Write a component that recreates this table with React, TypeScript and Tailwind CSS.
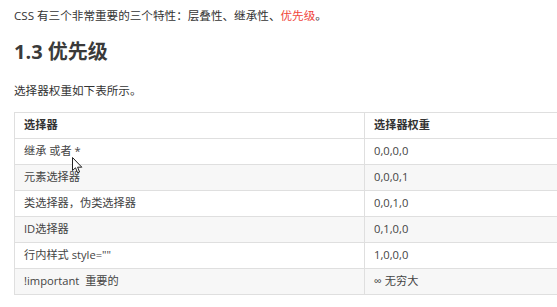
import React from "react";

const rows = [
  ["继承 或者 *", "0,0,0,0"],
  ["元素选择器", "0,0,0,1"],
  ["类选择器，伪类选择器", "0,0,1,0"],
  ["ID选择器", "0,1,0,0"],
  ['行内样式 style=""', "1,0,0,0"],
  ["!important  重要的", "∞ 无穷大"],
];

function Cursor() {
  return (
    <svg
      className="absolute left-[72px] top-[157px]"
      width="11"
      height="17"
      viewBox="0 0 11 17"
    >
      <path
        d="M0.5 0.5 L0.5 13.5 L3.5 10.8 L5.6 15.8 L7.6 15 L5.6 10.2 L9.8 10.2 Z"
        fill="#fff"
        stroke="#222"
        strokeWidth="1"
        strokeLinejoin="round"
      />
    </svg>
  );
}

export default function App() {
  return (
    <div
      className="relative w-[557px] h-[307px] overflow-hidden bg-white text-[#333]"
      style={{ fontFamily: '"Open Sans", "Noto Sans CJK SC", sans-serif' }}
    >
      <div className="pt-[6px] pl-[14px]">
        <p className="text-[11.6px] leading-[20px] whitespace-nowrap">
          CSS 有三个非常重要的三个特性：层叠性、继承性、
          <span className="text-[#f0443a]">优先级</span>。
        </p>
        <h2 className="mt-[12px] text-[20px] leading-[28px] font-bold text-[#3a3a3a]">
          1.3 优先级
        </h2>
        <p className="mt-[15px] text-[11.6px] leading-[20px]">选择器权重如下表所示。</p>

        <table className="mt-[11px] w-[620px] border-collapse text-[11.2px] text-[#444]">
          <thead>
            <tr className="h-[26px] bg-white">
              <th className="w-[350px] border border-[#dfdfdf] px-[9px] text-left font-bold text-[#333]">
                选择器
              </th>
              <th className="border border-[#dfdfdf] px-[9px] text-left font-bold text-[#333]">
                选择器权重
              </th>
            </tr>
          </thead>
          <tbody>
            {rows.map(([a, b], i) => (
              <tr
                key={a}
                className={i % 2 === 1 ? "h-[26px] bg-[#f7f7f7]" : "h-[26px] bg-white"}
              >
                <td className="border border-[#dfdfdf] px-[9px] whitespace-pre">{a}</td>
                <td className="border border-[#dfdfdf] px-[9px]">{b}</td>
              </tr>
            ))}
          </tbody>
        </table>
      </div>
      <Cursor />
    </div>
  );
}
